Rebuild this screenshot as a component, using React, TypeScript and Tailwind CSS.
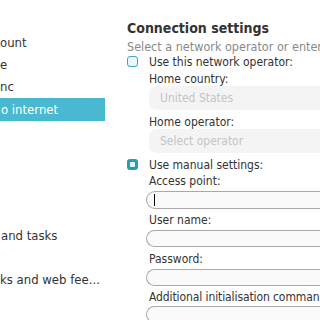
import React from "react";

const font = { fontFamily: '"DejaVu Sans Condensed", "Liberation Sans", sans-serif' };

export default function App() {
  return (
    <div className="w-[320px] h-[320px] overflow-hidden bg-white flex" style={font}>
      <div className="w-[105px] shrink-0 flex flex-col pt-[32px] text-[13px] text-[#333]">
        <div className="h-[22px] leading-[22px]">ount</div>
        <div className="h-[22px] leading-[22px]">e</div>
        <div className="h-[22px] leading-[22px]">nc</div>
        <div className="h-[23px] leading-[23px] bg-[#4bb8d1] text-white pl-[1px]">o internet</div>
        <div className="h-[104px]" />
        <div className="h-[22px] leading-[22px] pl-[1px]">and tasks</div>
        <div className="h-[22px]" />
        <div className="h-[22px] leading-[22px]">ks and web fee...</div>
      </div>
      <div className="ml-[22px] flex flex-col pt-[20px] min-w-0 flex-1 text-[12px] text-[#333]">
        <div className="text-[14px] font-bold leading-[17px] whitespace-nowrap">Connection settings</div>
        <div className="text-[12.5px] leading-[15px] text-[#8a8a8a] whitespace-nowrap mt-[2px]">Select a network operator or enter</div>
        <div className="flex items-center h-[15px]">
          <div className="w-[11px] h-[11px] rounded-[3px] border-[1.5px] border-[#3aa6c2] bg-[#eef5f7]" />
          <div className="ml-[11px] whitespace-nowrap">Use this network operator:</div>
        </div>
        <div className="ml-[22px] flex flex-col">
          <div className="leading-[14px] mt-[3px]">Home country:</div>
          <div className="h-[24px] rounded-l-[8px] bg-[#f4f4f4] pl-[11px] leading-[24px] text-[#c4c4c4] whitespace-nowrap">United States</div>
          <div className="leading-[14px] mt-[5px]">Home operator:</div>
          <div className="h-[24px] rounded-l-[8px] bg-[#f4f4f4] pl-[11px] leading-[24px] text-[#c4c4c4] whitespace-nowrap">Select operator</div>
        </div>
        <div className="flex items-center h-[15px] mt-[4px]">
          <div className="w-[11px] h-[11px] rounded-[3px] bg-[#2a9ab9] flex items-center justify-center">
            <div className="w-[5px] h-[5px] rounded-[1px] bg-[#e8f6fa]" />
          </div>
          <div className="ml-[11px] whitespace-nowrap">Use manual settings:</div>
        </div>
        <div className="ml-[19px] flex flex-col">
          <div className="pl-[3px] leading-[14px] mt-[2px]">Access point:</div>
          <div className="mt-[3px] h-[18px] rounded-l-[9px] border border-r-0 border-[#a9a9a9] bg-[#fafafa] relative">
            <div className="absolute left-[7px] top-[2px] h-[12px] w-px bg-black" />
          </div>
          <div className="pl-[3px] leading-[14px] mt-[4px]">User name:</div>
          <div className="mt-[3px] h-[17px] rounded-l-[9px] border border-r-0 border-[#a9a9a9] bg-[#fafafa]" />
          <div className="pl-[3px] leading-[14px] mt-[5px]">Password:</div>
          <div className="mt-[3px] h-[17px] rounded-l-[9px] border border-r-0 border-[#a9a9a9] bg-[#fafafa]" />
          <div className="pl-[3px] leading-[14px] mt-[4px] whitespace-nowrap tracking-[-0.1px]">Additional initialisation command</div>
          <div className="mt-[2px] h-[17px] shrink-0 rounded-l-[9px] border border-r-0 border-[#a9a9a9] bg-[#fafafa]" />
        </div>
      </div>
    </div>
  );
}
